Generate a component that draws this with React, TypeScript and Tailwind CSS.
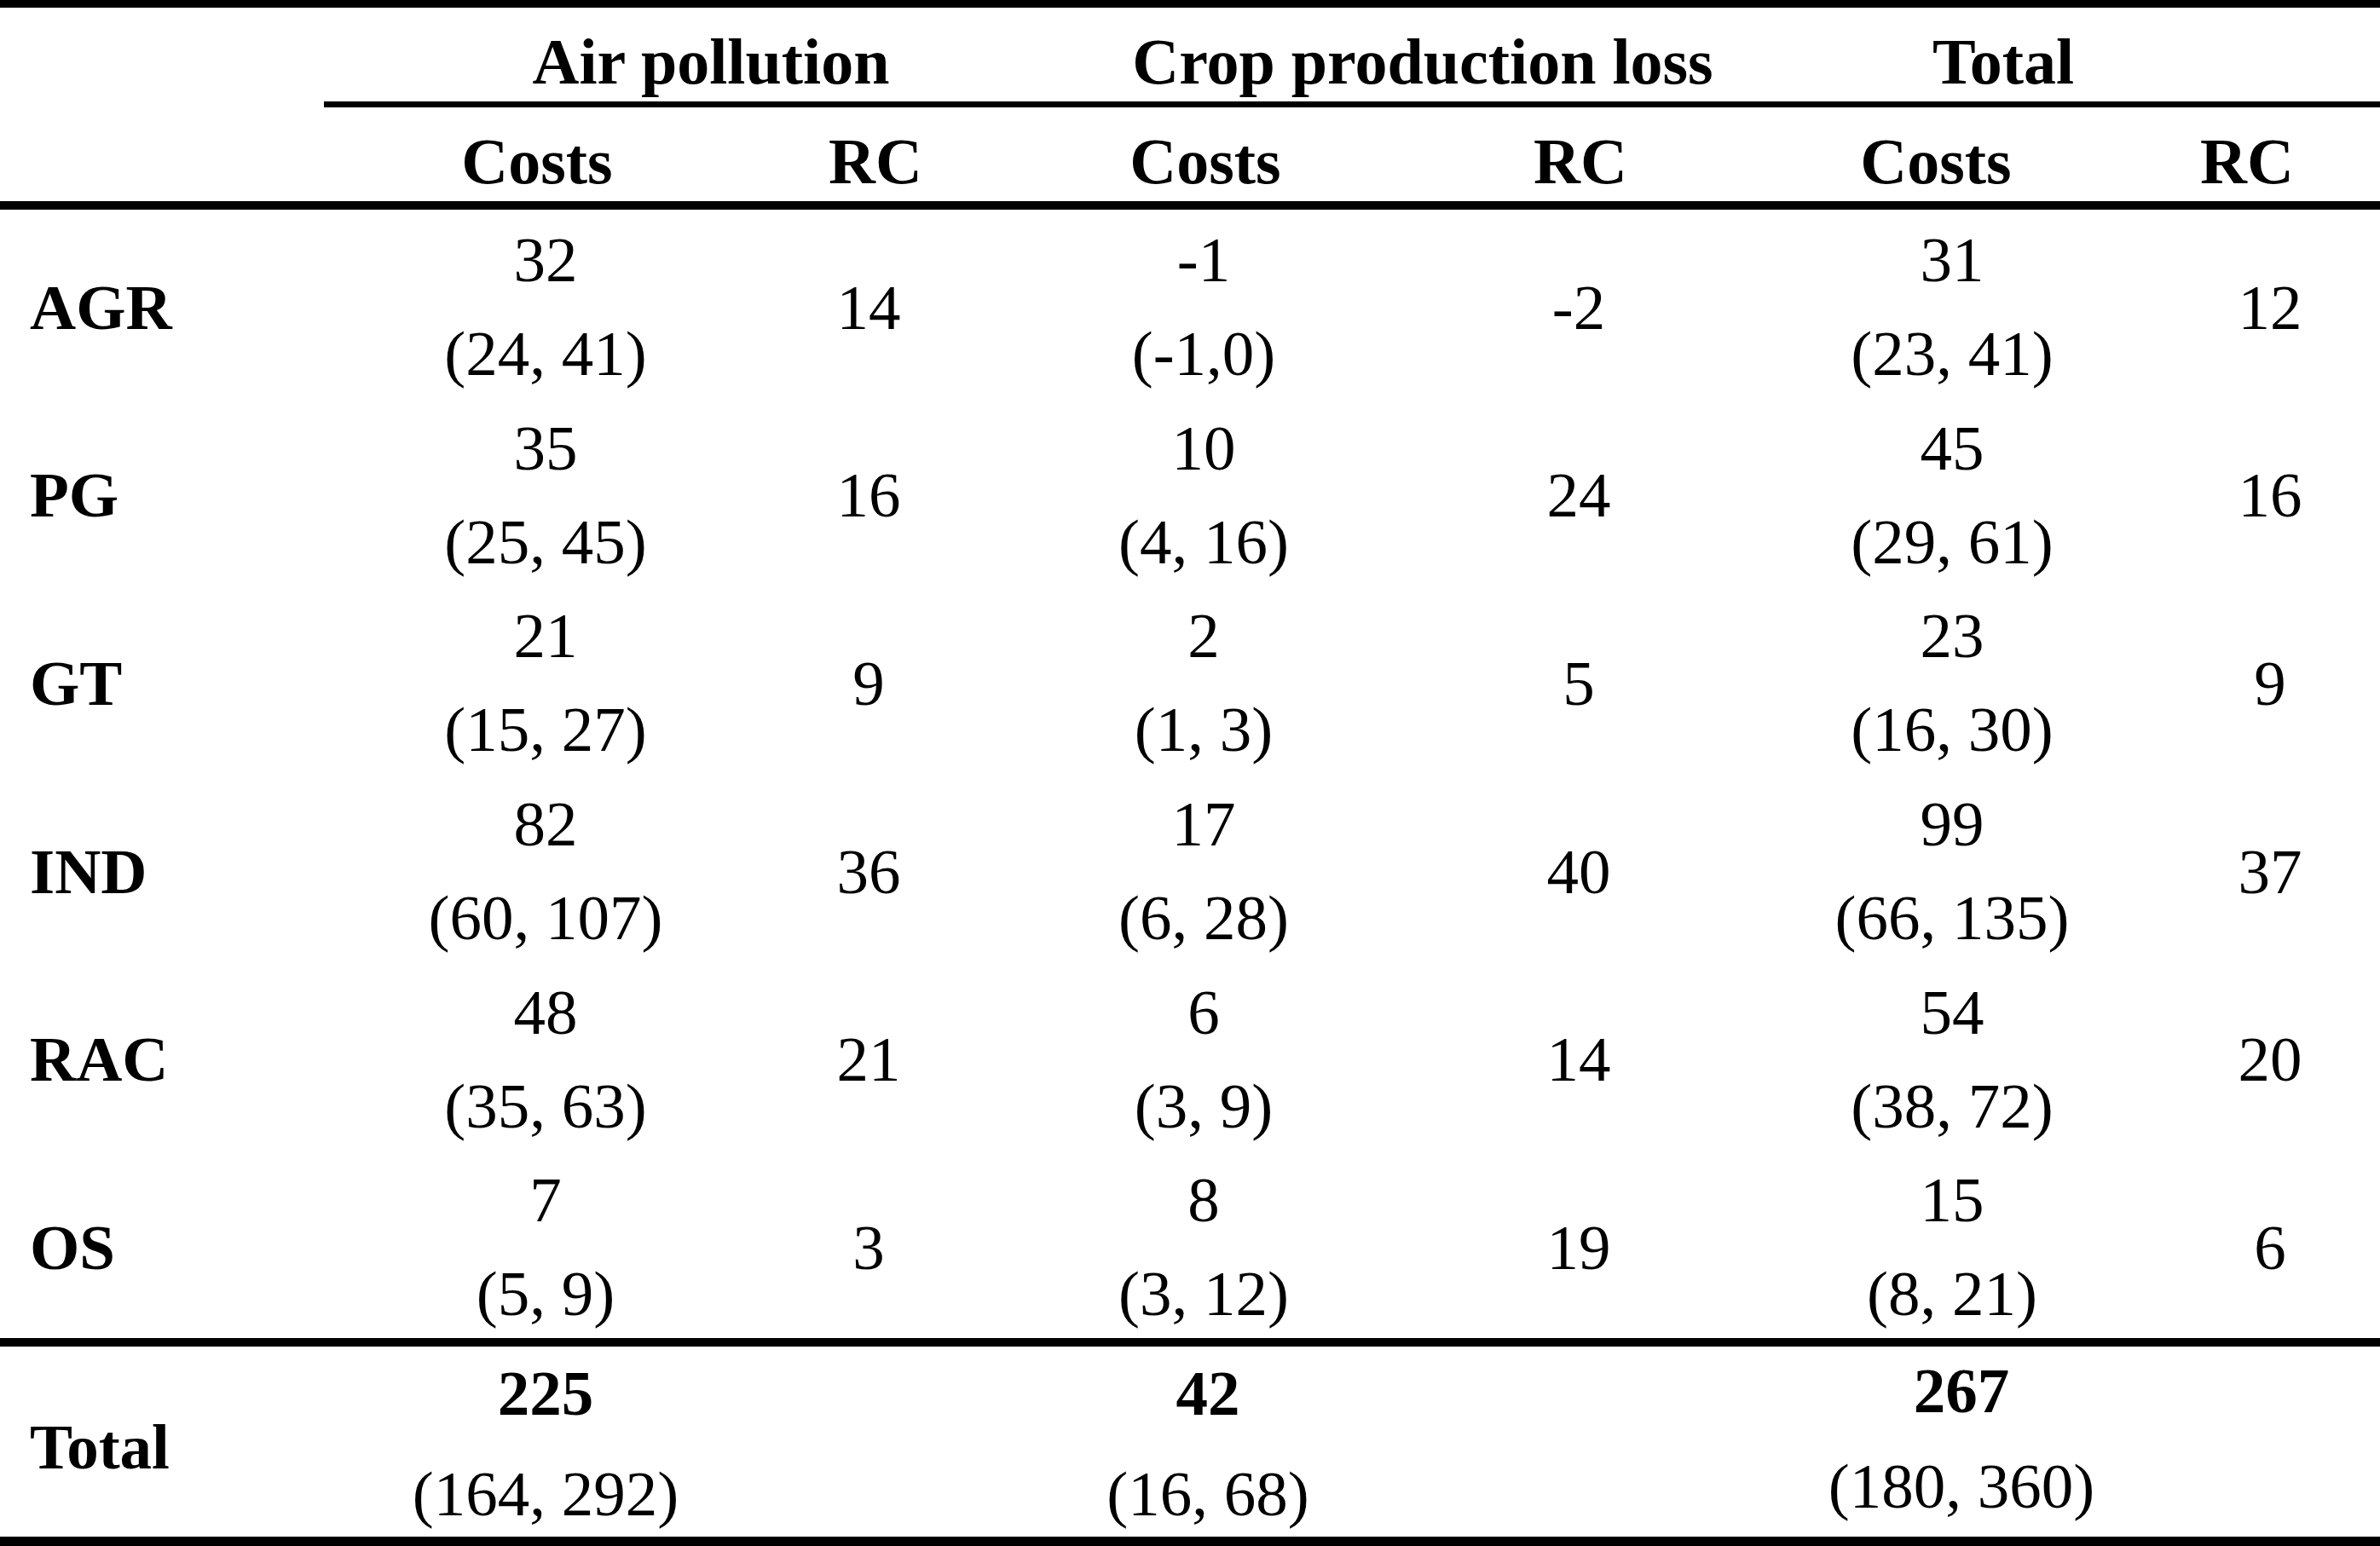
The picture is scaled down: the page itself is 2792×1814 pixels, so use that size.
const rows = [
	{ label: 'AGR', air: ['32', '(24, 41)'], airRc: '14', crop: ['-1', '(-1,0)'], cropRc: '-2', total: ['31', '(23, 41)'], totalRc: '12' },
	{ label: 'PG', air: ['35', '(25, 45)'], airRc: '16', crop: ['10', '(4, 16)'], cropRc: '24', total: ['45', '(29, 61)'], totalRc: '16' },
	{ label: 'GT', air: ['21', '(15, 27)'], airRc: '9', crop: ['2', '(1, 3)'], cropRc: '5', total: ['23', '(16, 30)'], totalRc: '9' },
	{ label: 'IND', air: ['82', '(60, 107)'], airRc: '36', crop: ['17', '(6, 28)'], cropRc: '40', total: ['99', '(66, 135)'], totalRc: '37' },
	{ label: 'RAC', air: ['48', '(35, 63)'], airRc: '21', crop: ['6', '(3, 9)'], cropRc: '14', total: ['54', '(38, 72)'], totalRc: '20' },
	{ label: 'OS', air: ['7', '(5, 9)'], airRc: '3', crop: ['8', '(3, 12)'], cropRc: '19', total: ['15', '(8, 21)'], totalRc: '6' },
];

const dataCols = 'grid grid-cols-[379px_522px_236px_550px_330px_546px_200px]';

function Pair({ value, ci }: { value: string; ci: string }) {
	return (
		<div className="flex flex-col items-center self-start pt-[4px] leading-[110px]">
			<span>{value}</span>
			<span>{ci}</span>
		</div>
	);
}

function Rc({ value }: { value: string }) {
	return <div className="flex items-center justify-center pt-[6px]">{value}</div>;
}

export default function App() {
	return (
		<div
			className="h-[1814px] w-[2792px] overflow-hidden bg-white text-[75px] text-black"
			style={{ fontFamily: '"Liberation Serif", "Times New Roman", serif' }}
		>
			<div className="h-[9px] bg-black" />

			{/* group headers */}
			<div className="grid h-[110px] grid-cols-[379px_910px_760px_602px] pt-[21px] text-[76px] font-bold leading-[84px]">
				<div />
				<div className="text-center">Air pollution</div>
				<div className="text-center">Crop production loss</div>
				<div className="text-center">Total</div>
			</div>
			<div className="ml-[380px] h-[7px] bg-black" />

			{/* sub headers */}
			<div className="grid h-[110px] grid-cols-[379px_502px_292px_482px_398px_436px_294px] pt-[21px] text-[76px] font-bold leading-[84px]">
				<div />
				<div className="text-center">Costs</div>
				<div className="text-center">RC</div>
				<div className="text-center">Costs</div>
				<div className="text-center">RC</div>
				<div className="text-center">Costs</div>
				<div className="text-center">RC</div>
			</div>
			<div className="h-[10px] bg-black" />

			{/* body */}
			<div className="flex h-[1324px] flex-col">
				{rows.map((r) => (
					<div key={r.label} className={`${dataCols} h-[220.67px] shrink-0`}>
						<div className="flex items-center pl-[35px] pt-[6px] font-bold">{r.label}</div>
						<Pair value={r.air[0]} ci={r.air[1]} />
						<Rc value={r.airRc} />
						<Pair value={r.crop[0]} ci={r.crop[1]} />
						<Rc value={r.cropRc} />
						<Pair value={r.total[0]} ci={r.total[1]} />
						<Rc value={r.totalRc} />
					</div>
				))}
			</div>
			<div className="h-[10px] bg-black" />

			{/* total row */}
			<div className={`${dataCols} h-[223px]`}>
				<div className="flex items-center pl-[35px] pt-[4px] font-bold">Total</div>
				<div className="-mt-[4px] flex flex-col items-center self-start leading-[118px]">
					<span className="font-bold">225</span>
					<span>(164, 292)</span>
				</div>
				<div />
				<div className="-mt-[4px] flex flex-col items-center self-start pl-[10px] leading-[118px]">
					<span className="font-bold">42</span>
					<span>(16, 68)</span>
				</div>
				<div />
				<div className="-mt-[4px] flex flex-col items-center self-start pl-[22px] leading-[112px]">
					<span className="font-bold">267</span>
					<span>(180, 360)</span>
				</div>
				<div />
			</div>
			<div className="h-[11px] bg-black" />
		</div>
	);
}
